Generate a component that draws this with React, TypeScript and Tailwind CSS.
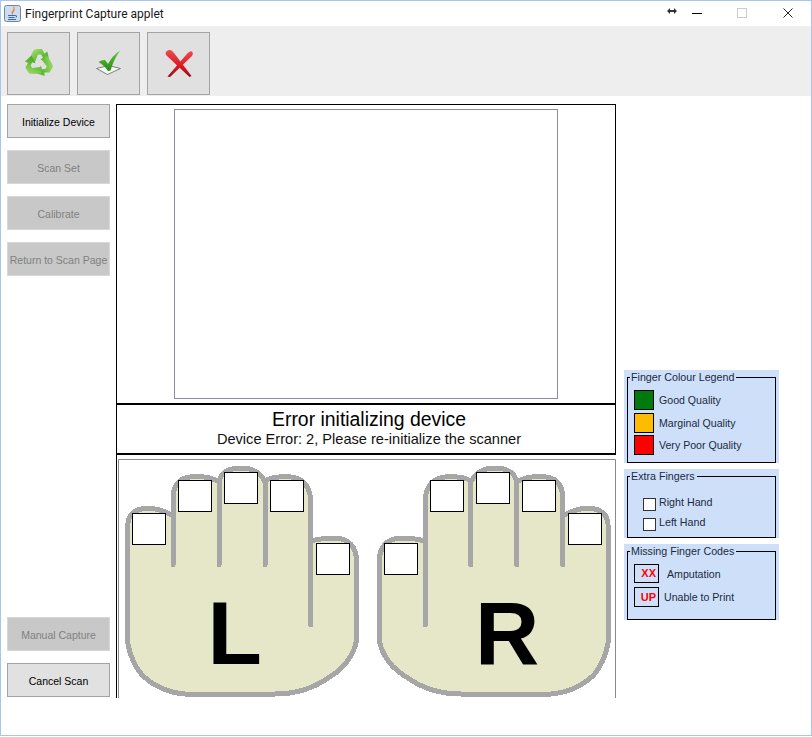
const font = "font-['Liberation_Sans',Arial,sans-serif]";

const handPath =
  "M127.5 642 L127.5 527 Q128 508 148 508.5 Q160 508 173 516 L173 565 L173 497 Q174 477 194 476.7 Q210 476 219 482 L219 565 L219 482 Q222 468 241 468 Q258 468 265 482 L265 565 L265 482 Q268 476.7 287 476.7 Q309 477 310.7 500 L310.7 625 L310.7 541 Q322 538 335 538 Q356 539 356.7 562 L356.7 640 Q352 664 328 678 Q305 694 275 694 L185 694 Q160 692 142 675 Q131 662 127.5 642 Z";

const leftBoxes = [
  [132, 513],
  [178, 480],
  [224, 472],
  [270, 480],
  [316, 543],
];
const rightBoxes = [
  [384, 543],
  [430, 480],
  [476, 472],
  [522, 480],
  [568, 513],
];

const recycleArrow = "M4.5 13 L9.5 3.5 Q10.5 2 12.5 2 H18 L20.5 6.5 L23.5 4.5 L25 13 L16.5 13 L19 10.5 L17 7.5 H14 L10.5 16 Z";

function ToolButton({ children }: { children: React.ReactNode }) {
  return (
    <button className="w-[63px] h-[63px] bg-[#e0e0e0] border border-[#a3a3a3] flex items-center justify-center">
      {children}
    </button>
  );
}

function SideButton({ label, disabled }: { label: string; disabled?: boolean }) {
  return (
    <button
      className={
        disabled
          ? "w-[103px] h-[34px] pt-[4px] bg-[#c8c8c8] border border-[#d8d8d8] text-[#808080] text-[10.5px] whitespace-nowrap"
          : "w-[103px] h-[34px] pt-[4px] bg-[#e1e1e1] border border-[#a3a3a3] text-black text-[10.5px] whitespace-nowrap"
      }
    >
      {label}
    </button>
  );
}

function Panel({ title, className, children }: { title: string; className: string; children: React.ReactNode }) {
  return (
    <div className={`w-[155px] bg-[#cee0f9] px-[3px] ${className}`}>
      <fieldset className="border border-black pl-[6px] h-full min-w-0">
        <legend className="text-[10.7px] leading-[13px] text-[#1a2a40] px-[1px] -ml-[4px] pr-[2px]">{title}</legend>
        {children}
      </fieldset>
    </div>
  );
}

function Swatch({ color, label }: { color: string; label: string }) {
  return (
    <div className="flex items-center h-[20px]">
      <div className="w-[20px] h-[20px] border border-black" style={{ backgroundColor: color }} />
      <span className="ml-[5px] pt-[2px] text-[10.6px] text-[#1a2a40]">{label}</span>
    </div>
  );
}

function Hands() {
  return (
    <svg viewBox="118 459 498 239" className="block w-[498px] h-[239px]">
      <path d="M118.5 698 V459.5 H615.5 V698" fill="none" stroke="#8a8a8a" strokeWidth="1" />
      <path d={handPath} fill="#e6e6c9" stroke="#a6a6a6" strokeWidth="5" strokeLinejoin="round" strokeLinecap="round" shapeRendering="crispEdges" />
      <g transform="translate(735.8 0) scale(-1 1)">
        <path d={handPath} fill="#e6e6c9" stroke="#a6a6a6" strokeWidth="5" strokeLinejoin="round" strokeLinecap="round" shapeRendering="crispEdges" />
      </g>
      {[...leftBoxes, ...rightBoxes].map(([x, y]) => (
        <rect key={`${x}-${y}`} x={x + 0.5} y={y + 0.5} width={33} height={31} fill="white" stroke="black" strokeWidth="1" />
      ))}
      <text x="207.5" y="664" fontFamily="Liberation Sans, Arial, sans-serif" fontWeight="700" fontSize="89" fill="black">
        L
      </text>
      <text x="475" y="664" fontFamily="Liberation Sans, Arial, sans-serif" fontWeight="700" fontSize="89" fill="black">
        R
      </text>
    </svg>
  );
}

export default function App() {
  return (
    <div className={`${font} w-[812px] h-[737px] bg-white overflow-hidden`}>
      <div className="w-[812px] h-[736px] border border-[#a9c4ee] flex flex-col">
        {/* title bar */}
        <div className="h-[25px] flex items-center shrink-0">
          <svg viewBox="0 0 17 17" className="w-[17px] h-[17px] ml-[3px]">
            <rect x="0.5" y="0.5" width="16" height="16" rx="2" fill="#cfdcec" stroke="#6f86a6" />
            <path d="M9.5 1.5 C12 5 6 6 8.5 9.5 C8 7 12 6 9.5 1.5 Z" fill="#e0762a" stroke="#e0762a" strokeWidth="0.5" />
            <path d="M4 10.5 H11 M4.5 12.5 H10.5 M4 14.5 H12" stroke="#3d6a9e" strokeWidth="1" />
            <path d="M11 10.5 Q14 10.5 12 12.5" stroke="#3d6a9e" fill="none" />
          </svg>
          <span className="ml-[4px] text-[12px] text-[#1a1a1a] font-['Roboto',sans-serif]">Fingerprint Capture applet</span>
          <div className="ml-auto flex items-center -mt-[1px]">
            <svg viewBox="0 0 10 6" className="w-[10px] h-[6px] mr-[15px] -mt-[4px]">
              <path d="M0 3 L3 0 V2 H7 V0 L10 3 L7 6 V4 H3 V6 Z" fill="#333" />
            </svg>
            <div className="w-[10px] h-[1px] bg-black mr-[35px]" />
            <div className="w-[10px] h-[10px] border border-[#cccccc] mr-[36px]" />
            <svg viewBox="0 0 10 10" className="w-[10px] h-[10px] mr-[18px]">
              <path d="M0.5 0.5 L9.5 9.5 M9.5 0.5 L0.5 9.5" stroke="#222" strokeWidth="1" />
            </svg>
          </div>
        </div>

        {/* toolbar */}
        <div className="h-[70px] shrink-0 bg-[#eeeeee] flex gap-[7px] pl-[6px] pt-[6px]">
          <ToolButton>
            <svg viewBox="0 0 30 30" className="w-[30px] h-[30px] -mt-[3px]">
              <defs>
                <linearGradient id="recycleFill" x1="0" y1="0" x2="1" y2="1">
                  <stop offset="0" stopColor="#b4e27a" />
                  <stop offset="0.6" stopColor="#62bb36" />
                  <stop offset="1" stopColor="#3f9a28" />
                </linearGradient>
              </defs>
              <path d={recycleArrow} fill="url(#recycleFill)" />
              <path d={recycleArrow} fill="url(#recycleFill)" transform="rotate(120 15 16)" />
              <path d={recycleArrow} fill="url(#recycleFill)" transform="rotate(240 15 16)" />
            </svg>
          </ToolButton>
          <ToolButton>
            <svg viewBox="0 0 30 30" className="w-[30px] h-[30px]">
              <defs>
                <linearGradient id="checkFill" x1="0" y1="0" x2="0" y2="1">
                  <stop offset="0" stopColor="#66c93a" />
                  <stop offset="1" stopColor="#268c12" />
                </linearGradient>
              </defs>
              <path d="M2.5 19.5 L13.5 25.5 L26.5 19.5 L14.5 16.5 Z" fill="#f6f6f6" stroke="#666" strokeWidth="0.8" />
              <path d="M4.5 13 Q8 10.5 11 11 L14 15 Q18 7 26 1.5 Q20 10 16.5 21.5 L14 22 Q10 16 4.5 13 Z" fill="url(#checkFill)" />
            </svg>
          </ToolButton>
          <ToolButton>
            <svg viewBox="0 0 30 30" className="w-[30px] h-[30px]">
              <defs>
                <linearGradient id="crossFill" x1="0" y1="0" x2="0" y2="1">
                  <stop offset="0" stopColor="#ee4a50" />
                  <stop offset="0.6" stopColor="#dd1720" />
                  <stop offset="1" stopColor="#8f1015" />
                </linearGradient>
              </defs>
              <path d="M1.5 4 Q3 0.5 6.5 1 Q8 1.5 10 4 L27.5 27 L25.5 28 L3 7 Q1.5 5.5 1.5 4 Z" fill="url(#crossFill)" />
              <path d="M28.5 3 Q29.5 5 28 7 L6 28 L3.5 27.5 L22 6 Q24 3 26 2.5 Q27.5 2 28.5 3 Z" fill="url(#crossFill)" />
            </svg>
          </ToolButton>
        </div>

        {/* main */}
        <div className="flex pl-[6px] pt-[8px] items-start">
          <div className="w-[103px] h-[593px] flex flex-col">
            <div className="flex flex-col gap-[12px]">
              <SideButton label="Initialize Device" />
              <SideButton label="Scan Set" disabled />
              <SideButton label="Calibrate" disabled />
              <SideButton label="Return to Scan Page" disabled />
            </div>
            <div className="mt-auto flex flex-col gap-[12px]">
              <SideButton label="Manual Capture" disabled />
              <SideButton label="Cancel Scan" />
            </div>
          </div>

          <div className="w-[500px] ml-[6px] flex flex-col">
            <div className="h-[299px] border border-b-0 border-black flex justify-center pt-[4px]">
              <div className="w-[384px] h-[290px] border border-[#8c8ca0] -ml-[1px]" />
            </div>
            <div className="h-[52px] pl-[6px] border-x border-y-2 border-x-black border-y-black flex flex-col items-center">
              <span className="text-[19.4px] leading-[22px] text-black mt-[3px]">Error initializing device</span>
              <span className="text-[14.6px] leading-[17px] text-[#111] mt-[1px]">Device Error: 2, Please re-initialize the scanner</span>
            </div>
            <div className="border-l border-black pl-[1px] pt-[4px] w-[500px]">
              <Hands />
            </div>
          </div>

          <div className="ml-[8px] pt-[266px] flex flex-col gap-[6px]">
            <Panel title="Finger Colour Legend" className="h-[93px] pt-[1px]">
              <div className="flex flex-col mt-[6px]">
                <Swatch color="#007a0c" label="Good Quality" />
                <div className="mt-[3px]">
                  <Swatch color="#ffbb00" label="Marginal Quality" />
                </div>
                <div className="mt-[2px]">
                  <Swatch color="#ff0000" label="Very Poor Quality" />
                </div>
              </div>
            </Panel>
            <Panel title="Extra Fingers" className="h-[69px] pt-[1px]">
              <div className="flex flex-col gap-[7px] mt-[15px] pl-[9px]">
                <div className="flex items-start">
                  <div className="w-[13px] h-[13px] bg-white border border-[#333]" />
                  <span className="ml-[3px] -mt-[4px] text-[10.7px] leading-[16px] text-[#1a2a40]">Right Hand</span>
                </div>
                <div className="flex items-start">
                  <div className="w-[13px] h-[13px] bg-white border border-[#333]" />
                  <span className="ml-[3px] -mt-[4px] text-[10.7px] leading-[16px] text-[#1a2a40]">Left Hand</span>
                </div>
              </div>
            </Panel>
            <Panel title="Missing Finger Codes" className="h-[76px] pt-[1px]">
              <div className="flex flex-col gap-[4px] mt-[6px]">
                <div className="flex items-center">
                  <div className="w-[25px] h-[19px] border border-black text-[#ff0000] font-bold text-[11px] leading-[17px] text-right pr-[2px]">XX</div>
                  <span className="ml-[8px] pt-[2px] text-[10.6px] text-[#1a2a40]">Amputation</span>
                </div>
                <div className="flex items-center">
                  <div className="w-[25px] h-[20px] border border-black text-[#ff0000] font-bold text-[11px] leading-[18px] text-right pr-[2px]">UP</div>
                  <span className="ml-[5px] pt-[2px] text-[10.6px] text-[#1a2a40]">Unable to Print</span>
                </div>
              </div>
            </Panel>
          </div>
        </div>
      </div>
    </div>
  );
}
